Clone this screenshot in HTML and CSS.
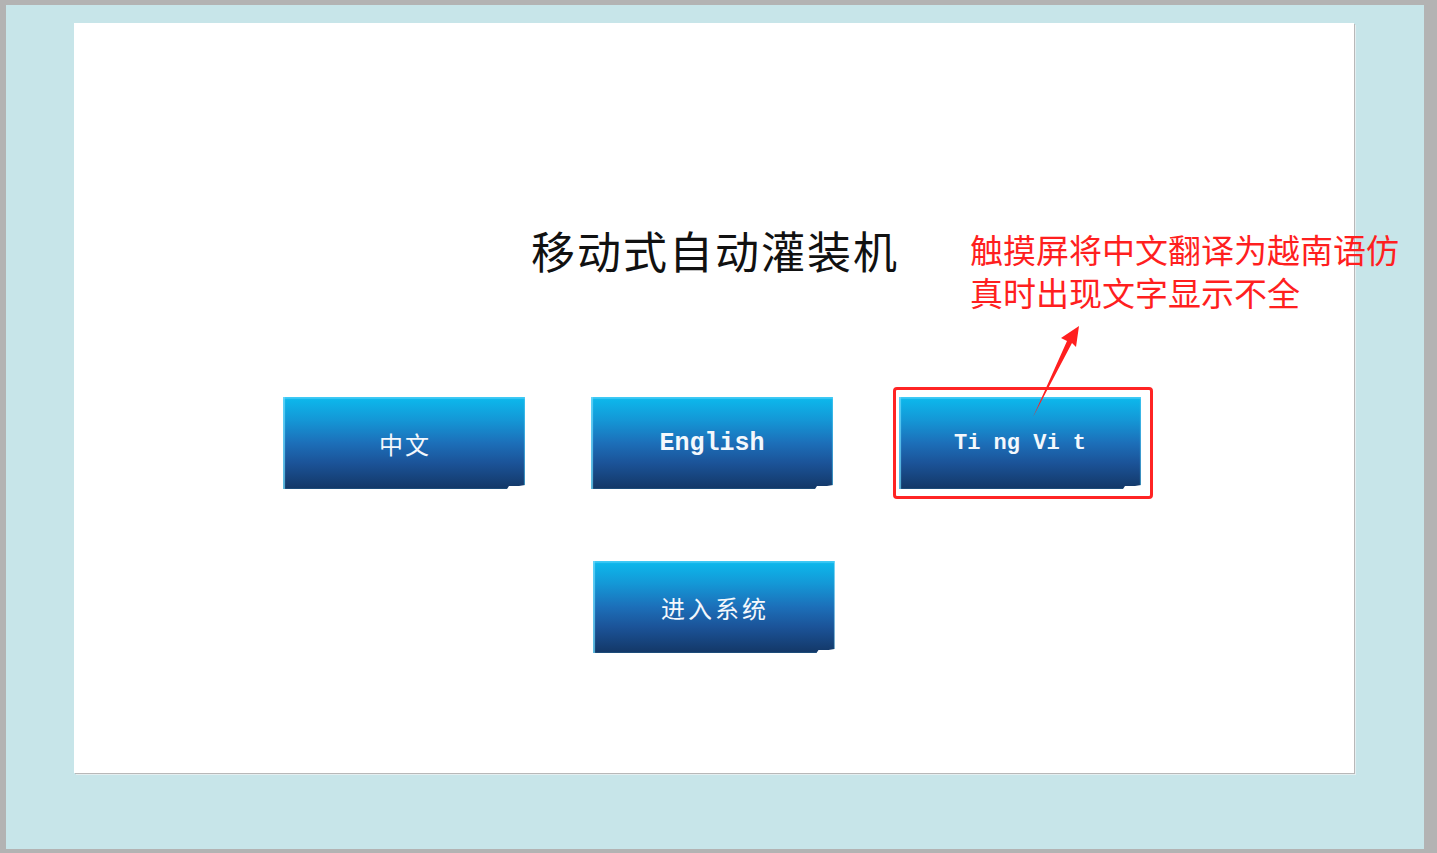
FILE: index.html
```html
<!DOCTYPE html>
<html lang="zh-CN">
<head>
<meta charset="utf-8">
<title>移动式自动灌装机</title>
<link rel="stylesheet" href="styles.css">
</head>
<body>
<div class="frame">
  <div class="panel">
    <h1 class="title">移动式自动灌装机</h1>
    <div class="row row-first">
      <button class="btn btn-cn">中文</button>
      <button class="btn btn-en">English</button>
      <button class="btn btn-vi">Ti ng Vi t</button>
    </div>
    <div class="row row-second">
      <button class="btn btn-cn btn-enter">进入系统</button>
    </div>

    <div class="note">触摸屏将中文翻译为越南语仿<br>真时出现文字显示不全</div>
    <div class="mark"></div>
    <svg class="arrow" width="80" height="120" viewBox="0 0 80 120">
      <polygon points="59,16 41,28 47,31 13,107 52,33 56,37" fill="#ff1f1f"/>
    </svg>
  </div>
</div>
</body>
</html>
```
FILE: styles.css
```css
html, body {
  margin: 0;
  padding: 0;
}
body {
  width: 1437px;
  height: 853px;
  background: #b3b3b3;
  overflow: hidden;
}
.frame {
  box-sizing: border-box;
  margin: 5px 0 0 6px;
  width: 1418px;
  height: 844px;
  background: #c7e5e9;
  padding: 18px 0 0 68px;
}
.panel {
  position: relative;
  box-sizing: border-box;
  width: 1280px;
  height: 750px;
  background: #ffffff;
  box-shadow: 1px 1px 0 #b8b8b8, 2px 2px 0 #e4eef0;
  padding-top: 199px;
  display: flex;
  flex-direction: column;
  align-items: center;
}
.title {
  margin: 0;
  font-family: "Noto Sans CJK SC", sans-serif;
  font-weight: 400;
  font-size: 44px;
  line-height: 56px;
  letter-spacing: 2px;
  color: #111;
  padding-left: 2px;
}
.row {
  display: flex;
  gap: 66px;
  margin-top: 119px;
}
.row-first {
  margin-right: 4px;
}
.row-second {
  margin-top: 72px;
  margin-right: 1px;
}
.btn {
  box-sizing: border-box;
  width: 242px;
  height: 92px;
  border: 0;
  padding: 0;
  color: #f4f8fc;
  background: linear-gradient(180deg, #0cbaed 0%, #1497d6 25%, #1c6fb9 50%, #1b5398 72%, #133766 100%);
  box-shadow: inset 2px 0 1px rgba(110, 215, 250, 0.8), inset 0 2px 1px rgba(90, 210, 250, 0.6), inset -1px 0 1px rgba(90, 200, 240, 0.6);
  clip-path: polygon(0 0, 100% 0, 100% calc(100% - 4px), calc(100% - 6px) calc(100% - 3px), calc(100% - 16px) calc(100% - 3px), calc(100% - 18px) 100%, 0 100%);
  display: flex;
  align-items: center;
  justify-content: center;
}
.btn-cn {
  font-family: "Noto Sans CJK SC", sans-serif;
  font-size: 24px;
  letter-spacing: 2px;
  padding-left: 2px;
}
.btn-enter {
  letter-spacing: 3px;
  padding-left: 3px;
}
.btn-en {
  font-family: "Liberation Mono", monospace;
  font-weight: 700;
  font-size: 25px;
}
.btn-vi {
  font-family: "Liberation Mono", monospace;
  font-weight: 700;
  font-size: 22px;
  white-space: pre;
}
.note {
  position: absolute;
  left: 896px;
  top: 205px;
  font-family: "Noto Sans CJK SC", sans-serif;
  font-size: 33px;
  line-height: 43px;
  color: #ff1f1f;
  white-space: nowrap;
}
.mark {
  position: absolute;
  left: 819px;
  top: 364px;
  width: 260px;
  height: 112px;
  box-sizing: border-box;
  border: 3px solid #ff2424;
  border-radius: 4px;
}
.arrow {
  position: absolute;
  left: 946px;
  top: 287px;
}
```
